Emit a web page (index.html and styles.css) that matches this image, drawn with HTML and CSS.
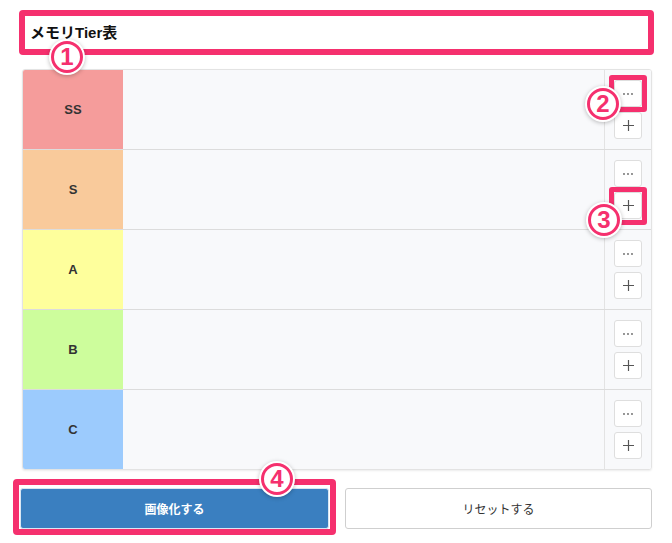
FILE: index.html
```html
<!DOCTYPE html>
<html lang="ja">
<head>
<meta charset="utf-8">
<title>メモリTier表</title>
<link rel="stylesheet" href="styles.css">
</head>
<body>
<div class="page">
  <div class="title-wrap">
    <div class="title-input">メモリTier表</div>
  </div>

  <div class="tier-table">
    <div class="tier-row">
      <div class="tier-label ss">SS</div>
      <div class="tier-items"></div>
      <div class="tier-controls">
        <button class="ctl"><svg width="12" height="4" viewBox="0 0 12 4"><circle cx="2" cy="2" r="0.9" fill="#666"/><circle cx="6" cy="2" r="0.9" fill="#666"/><circle cx="10" cy="2" r="0.9" fill="#666"/></svg></button>
        <button class="ctl"><svg width="13" height="13" viewBox="0 0 13 13"><path d="M6.5 1v11M1 6.5h11" stroke="#555" stroke-width="1.2"/></svg></button>
      </div>
    </div>
    <div class="tier-row">
      <div class="tier-label s">S</div>
      <div class="tier-items"></div>
      <div class="tier-controls">
        <button class="ctl"><svg width="12" height="4" viewBox="0 0 12 4"><circle cx="2" cy="2" r="0.9" fill="#666"/><circle cx="6" cy="2" r="0.9" fill="#666"/><circle cx="10" cy="2" r="0.9" fill="#666"/></svg></button>
        <button class="ctl"><svg width="13" height="13" viewBox="0 0 13 13"><path d="M6.5 1v11M1 6.5h11" stroke="#555" stroke-width="1.2"/></svg></button>
      </div>
    </div>
    <div class="tier-row">
      <div class="tier-label a">A</div>
      <div class="tier-items"></div>
      <div class="tier-controls">
        <button class="ctl"><svg width="12" height="4" viewBox="0 0 12 4"><circle cx="2" cy="2" r="0.9" fill="#666"/><circle cx="6" cy="2" r="0.9" fill="#666"/><circle cx="10" cy="2" r="0.9" fill="#666"/></svg></button>
        <button class="ctl"><svg width="13" height="13" viewBox="0 0 13 13"><path d="M6.5 1v11M1 6.5h11" stroke="#555" stroke-width="1.2"/></svg></button>
      </div>
    </div>
    <div class="tier-row">
      <div class="tier-label b">B</div>
      <div class="tier-items"></div>
      <div class="tier-controls">
        <button class="ctl"><svg width="12" height="4" viewBox="0 0 12 4"><circle cx="2" cy="2" r="0.9" fill="#666"/><circle cx="6" cy="2" r="0.9" fill="#666"/><circle cx="10" cy="2" r="0.9" fill="#666"/></svg></button>
        <button class="ctl"><svg width="13" height="13" viewBox="0 0 13 13"><path d="M6.5 1v11M1 6.5h11" stroke="#555" stroke-width="1.2"/></svg></button>
      </div>
    </div>
    <div class="tier-row">
      <div class="tier-label c">C</div>
      <div class="tier-items"></div>
      <div class="tier-controls">
        <button class="ctl"><svg width="12" height="4" viewBox="0 0 12 4"><circle cx="2" cy="2" r="0.9" fill="#666"/><circle cx="6" cy="2" r="0.9" fill="#666"/><circle cx="10" cy="2" r="0.9" fill="#666"/></svg></button>
        <button class="ctl"><svg width="13" height="13" viewBox="0 0 13 13"><path d="M6.5 1v11M1 6.5h11" stroke="#555" stroke-width="1.2"/></svg></button>
      </div>
    </div>
  </div>

  <div class="actions">
    <button class="btn btn-primary">画像化する</button>
    <button class="btn btn-secondary">リセットする</button>
  </div>

  <div class="hl hl-2"></div>
  <div class="hl hl-3"></div>
  <div class="hl hl-4"></div>

  <div class="badge badge-1">1</div>
  <div class="badge badge-2">2</div>
  <div class="badge badge-3">3</div>
  <div class="badge badge-4">4</div>
</div>
</body>
</html>
```

FILE: styles.css
```css
* { box-sizing: border-box; }
html, body {
  margin: 0;
  padding: 0;
  background: #ffffff;
}
body {
  font-family: "Liberation Sans", "Noto Sans CJK JP", sans-serif;
  color: #222;
}
.page {
  position: relative;
  width: 672px;
  height: 543px;
  overflow: hidden;
  padding-top: 10px;
}
.title-wrap {
  margin: 0 18px 0 19px;
  border: 6px solid #f5306e;
  border-radius: 4px;
  height: 45px;
  background: #fff;
}
.title-input {
  height: 33px;
  line-height: 33px;
  padding-left: 5px;
  font-size: 15px;
  font-weight: bold;
  color: #111;
}
.tier-table {
  margin: 14px 20px 0 22px;
  border: 1px solid #e3e3e3;
  border-radius: 3px;
  box-shadow: 0 1px 2px rgba(0,0,0,0.08);
  overflow: hidden;
}
.tier-row {
  display: flex;
  height: 80px;
  border-bottom: 1px solid #dcdcdc;
}
.tier-row:last-child {
  border-bottom: none;
  height: 79px;
}
.tier-label {
  width: 100px;
  flex: none;
  display: flex;
  align-items: center;
  justify-content: center;
  font-size: 13px;
  font-weight: bold;
  color: #333;
}
.ss { background: #f59c9b; }
.s { background: #f9ca9b; }
.a { background: #feff9c; }
.b { background: #cdfd9c; }
.c { background: #9ccbfd; }
.tier-items {
  flex: 1;
  background: #f8f9fb;
}
.tier-controls {
  width: 47px;
  flex: none;
  border-left: 1px solid #e3e3e3;
  background: #f8f9fb;
  display: flex;
  flex-direction: column;
  align-items: center;
  justify-content: center;
  gap: 5px;
}
.ctl {
  width: 28px;
  height: 27px;
  padding: 0;
  border: 1px solid #dedede;
  border-radius: 3px;
  background: #fff;
  display: flex;
  align-items: center;
  justify-content: center;
}
.actions {
  display: flex;
  gap: 16px;
  margin: 18px 20px 0 20px;
}
.btn {
  height: 41px;
  border-radius: 3px;
  font-family: "Noto Sans CJK JP", "Liberation Sans", sans-serif;
  font-size: 12px;
}
.btn-primary {
  width: 309px;
  background: #3a7fc0;
  border: 1px solid #d9e6f3;
  color: #fff;
  font-weight: bold;
}
.btn-secondary {
  flex: 1;
  background: #fff;
  border: 1px solid #cfcfcf;
  color: #333;
}
.hl {
  position: absolute;
  border: 5px solid #f5306e;
  border-radius: 3px;
}
.hl-2 { left: 609px; top: 75px; width: 38px; height: 37px; }
.hl-3 { left: 609px; top: 187px; width: 38px; height: 38px; }
.hl-4 { left: 13px; top: 479px; width: 323px; height: 56px; border-width: 6px; border-radius: 4px; }
.badge {
  position: absolute;
  width: 32px;
  height: 32px;
  border-radius: 50%;
  border: 3px solid #f5306e;
  background: #fff;
  box-shadow: 0 0 0 2px #fff, 0 1px 4px 2px rgba(0,0,0,0.25);
  color: #f5306e;
  font-family: "Liberation Sans", sans-serif;
  font-weight: bold;
  font-size: 24px;
  line-height: 26px;
  text-align: center;
}
.badge-1 { left: 51px; top: 41px; }
.badge-2 { left: 587px; top: 88px; }
.badge-3 { left: 588px; top: 204px; }
.badge-4 { left: 261px; top: 463px; }
```
